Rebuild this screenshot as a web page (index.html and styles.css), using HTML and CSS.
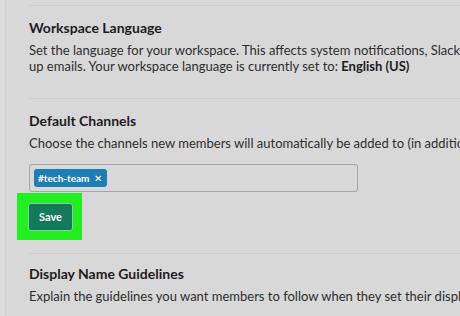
FILE: index.html
```html
<!DOCTYPE html>
<html lang="en">
<head>
    <meta charset="UTF-8">
    <meta name="viewport" content="width=device-width, initial-scale=1.0">
    <title>Workspace Settings</title>
    <link rel="stylesheet" href="styles.css">
</head>
<body>
    <div class="page">
        <div class="section">
            <h2>Workspace Language</h2>
            <p>Set the language for your workspace. This affects system notifications, Slackbot messages and sign<br>up emails. Your workspace language is currently set to: <strong>English (US)</strong></p>
        </div>

        <div class="section channels">
            <h2>Default Channels</h2>
            <p>Choose the channels new members will automatically be added to (in addition to #general).</p>
            <div class="channel-input">
                <span class="tag">#tech-team <span class="tag-x">&#x2715;</span></span>
            </div>
            <div class="highlight">
                <button type="button">Save</button>
            </div>
        </div>

        <div class="section last">
            <h2>Display Name Guidelines</h2>
            <p>Explain the guidelines you want members to follow when they set their display names.</p>
        </div>
    </div>
</body>
</html>
```

FILE: styles.css
```css
html, body { margin: 0; padding: 0; }
body { background: #dcdcdc; font-family: Lato, "Open Sans", sans-serif; color: #1d1c1d; overflow: hidden; width: 460px; height: 316px; }
.page { margin-left: 5px; border-left: 1px solid #d0d0d0; background: #d8d8d8; height: 316px; padding-left: 23px; padding-top: 5px; white-space: nowrap; box-sizing: border-box; }
.section { border-top: 1px solid #cecece; padding-top: 13px; padding-bottom: 24px; }
.channels { padding-bottom: 13px; }
.last { padding-top: 11px; }
h2 { margin: 0 0 5px; font-size: 14px; font-weight: 700; line-height: 18px; color: #1d1c1d; }
p { margin: 0; font-size: 13px; line-height: 16px; color: #2e2e2e; }
p strong { font-weight: 700; color: #1d1c1d; }
.channel-input { margin-top: 13px; width: 329px; height: 28px; border: 1px solid #a5a5a5; border-radius: 3px; display: flex; align-items: center; padding-left: 4px; box-sizing: border-box; }
.tag { background: #1d7db5; color: #fff; font-size: 10px; font-weight: 700; line-height: 18px; height: 18px; padding: 0 5px 0 4px; border-radius: 3px; display: inline-flex; align-items: center; gap: 5px; }
.tag-x { font-size: 10px; font-weight: 400; }
.highlight { margin-left: -12px; margin-top: 1px; width: 65px; height: 47px; background: #22ee22; display: flex; align-items: center; justify-content: center; }
button { background: #137a5a; color: #fff; font-family: Lato, sans-serif; font-size: 11px; font-weight: 700; border: 1px solid #8fc9b0; border-radius: 3px; width: 45px; height: 28px; padding: 0; margin-left: 2px; cursor: pointer; }
```
